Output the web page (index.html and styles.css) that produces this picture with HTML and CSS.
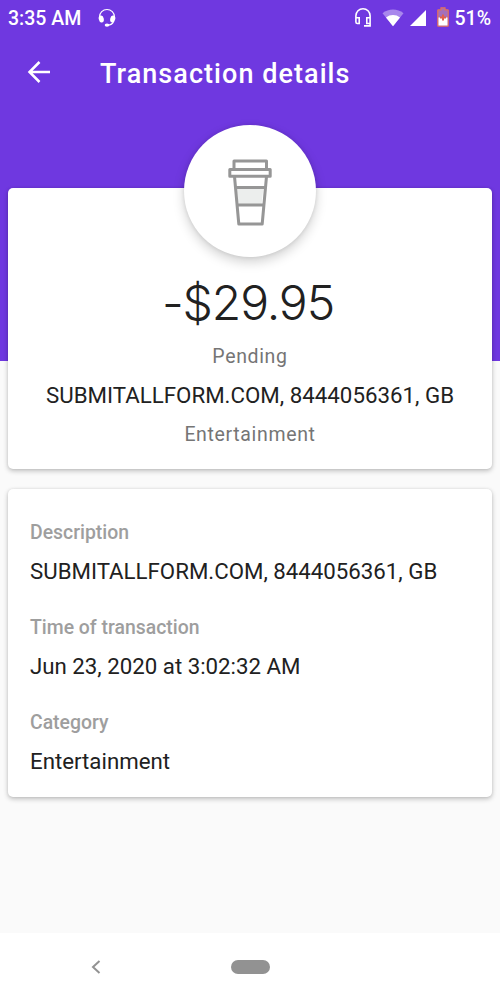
FILE: index.html
```html
<!DOCTYPE html>
<html lang="en">
<head>
<meta charset="utf-8">
<title>Transaction details</title>
<link rel="stylesheet" href="styles.css">
</head>
<body>
<div class="screen">
  <div class="status-bar">
    <span class="clock">3:35 AM</span>
    <svg class="support-icon" width="20" height="20" viewBox="0 0 20 20">
      <path d="M2.500 11V9a7.500 7.500 0 0 1 15 0v2" fill="none" stroke="#fff" stroke-width="1.200"/>
      <ellipse cx="4.300" cy="11" rx="2.500" ry="3.500" transform="rotate(-12 4.300 11)" fill="#fff"/>
      <ellipse cx="15.700" cy="11" rx="2.500" ry="3.500" transform="rotate(12 15.700 11)" fill="#fff"/>
      <path d="M16.500 13.500c-.8 2.400-2.800 3.500-6 3.700" fill="none" stroke="#fff" stroke-width="1.100"/>
      <ellipse cx="10" cy="17.100" rx="2.300" ry="1.600" fill="#fff"/>
    </svg>
    <svg class="headset-icon" width="18" height="21" viewBox="0 0 18 21">
      <path d="M1.900 11V8.800a7.100 7.100 0 0 1 14.200 0V18.900H10M1.900 10.800h3.300v5.700H3.400a1.500 1.500 0 0 1-1.500-1.500zM16.100 10.800h-3.300v5.700h3.300" fill="none" stroke="#fff" stroke-width="1.600"/>
    </svg>
    <svg class="wifi-icon" width="22" height="18" viewBox="0 0 22 18">
      <path d="M.5 4.200C6.500-.8 15.500-.8 21.500 4.200L11 17.300z" fill="#fff" opacity=".4"/>
      <path d="M4 8.500c4.100-3.300 9.900-3.300 14 0l-7 8.800z" fill="#fff"/>
    </svg>
    <svg class="signal-icon" width="16" height="16" viewBox="0 0 16 16">
      <path d="M16 0v16H0z" fill="#fff"/>
    </svg>
    <svg class="battery-icon" width="12" height="20" viewBox="0 0 12 20">
      <path d="M4 .8h4v2h2.700q.5 0 .5.500v15.400q0 .5-.5.500H1.300q-.5 0-.5-.5V3.300q0-.5.500-.5H4z" fill="#a56fbb" stroke="#e1705f" stroke-width="1.300"/>
      <path d="M1.500 10.500h9v8h-9z" fill="#fff"/>
      <path d="M6 7.500v6M3 10.500h6" stroke="#e1604c" stroke-width="2"/>
    </svg>
    <span class="battery-level">51%</span>
  </div>

  <header class="app-bar">
    <svg class="back-icon" width="24" height="24" viewBox="0 0 24 24">
      <path d="M23 12H3M12.500 2L2.500 12l10 10" fill="none" stroke="#fff" stroke-width="2.500"/>
    </svg>
    <h1 class="title">Transaction details</h1>
  </header>

  <main class="content">
    <section class="card summary">
      <div class="avatar">
        <svg class="cup" width="44" height="68" viewBox="0 0 44 68">
          <path d="M8.500 28.500h27l-2 17.500h-23z" fill="#eceeed"/>
          <g fill="none" stroke="#969696" stroke-width="3" stroke-linejoin="round">
            <path d="M6 10.500V2h32.500v8.500"/>
            <path d="M1.800 10.500h40.400v6.800H1.800z"/>
            <path d="M6.500 17.500L10.800 65h23.400l4.300-47.500M8 28.500h29M9.500 46h26"/>
          </g>
        </svg>
      </div>
      <div class="amount">-$29.95</div>
      <div class="muted pending">Pending</div>
      <div class="merchant">SUBMITALLFORM.COM, 8444056361, GB</div>
      <div class="muted category">Entertainment</div>
    </section>

    <section class="card details">
      <dl class="fields">
        <div class="field"><dt>Description</dt><dd>SUBMITALLFORM.COM, 8444056361, GB</dd></div>
        <div class="field"><dt>Time of transaction</dt><dd>Jun 23, 2020 at 3:02:32 AM</dd></div>
        <div class="field"><dt>Category</dt><dd>Entertainment</dd></div>
      </dl>
    </section>
  </main>

  <nav class="nav-bar">
    <svg class="nav-back" width="10" height="14" viewBox="0 0 10 14">
      <path d="M8.500 1L2 7l6.500 6" fill="none" stroke="#929292" stroke-width="2"/>
    </svg>
    <div class="nav-home"></div>
  </nav>
</div>
</body>
</html>
```

FILE: styles.css
```css
* { box-sizing: border-box; }
body { margin: 0; font-family: Roboto, "Liberation Sans", sans-serif; color: #212121; }
.screen {
  display: flex;
  flex-direction: column;
  width: 500px;
  height: 1000px;
  overflow: hidden;
  background: linear-gradient(#6f38e0 361px, #fafafa 361px);
}
.status-bar {
  display: flex;
  align-items: center;
  height: 36px;
  padding: 0 9px 0 8px;
  color: #fff;
  font-size: 19.5px;
  font-weight: 500;
}
.clock { white-space: nowrap; }
.support-icon { margin: 0 0 1px 16px; }
.headset-icon { margin: 0 0 2px auto; }
.wifi-icon { margin: 0 0 1px 10px; }
.signal-icon { margin: 0 0 1px 6px; }
.battery-icon { margin: 0 0 2px 11px; }
.battery-level { margin-left: 5px; }
.app-bar {
  display: flex;
  align-items: center;
  height: 76px;
  padding-left: 27px;
  color: #fff;
}
.back-icon { margin-top: -4px; }
.title { margin: 0 0 0 49px; font-size: 27px; font-weight: 500; letter-spacing: 1.05px; }
.content { flex: 1; padding: 76px 8px 0; }
.card {
  background: #fff;
  border-radius: 5px;
  box-shadow: 0 2px 5px rgba(0, 0, 0, 0.24), 0 0 3px rgba(0, 0, 0, 0.08);
}
.summary {
  display: flex;
  flex-direction: column;
  align-items: center;
  height: 281px;
  white-space: nowrap;
}
.avatar {
  display: flex;
  align-items: center;
  justify-content: center;
  flex: none;
  width: 132px;
  height: 132px;
  margin-top: -63px;
  border-radius: 50%;
  background: #fff;
  box-shadow: 0 5px 12px rgba(0, 0, 0, 0.18), 0 0 4px rgba(0, 0, 0, 0.1);
}
.cup { margin-top: 3px; }
.amount {
  margin: 16px 4px -1px 0;
  font-family: Inter, Roboto, sans-serif;
  font-size: 48px;
  line-height: 60px;
  font-weight: 300;
  letter-spacing: -1.1px;
}
.muted { font-size: 19.5px; line-height: 24px; letter-spacing: 0.65px; color: #757575; }
.pending { margin-top: 13px; }
.merchant { margin-top: 13px; font-size: 22.3px; line-height: 26px; }
.category { margin-top: 15px; }
.details { height: 308px; margin-top: 20px; padding: 32px 22px 0; }
.fields { display: flex; flex-direction: column; gap: 32px; margin: 0; }
.field { display: flex; flex-direction: column; gap: 13px; white-space: nowrap; }
.field dt { font-size: 19.4px; line-height: 24px; font-weight: 500; color: #9e9e9e; }
.field dd { margin: 0; font-size: 22.25px; line-height: 26px; }
.nav-bar {
  display: flex;
  align-items: center;
  height: 67px;
  padding-left: 91px;
  background: #fff;
}
.nav-home {
  width: 39px;
  height: 14px;
  margin-left: 130px;
  border-radius: 7px;
  background: #929292;
}
```
